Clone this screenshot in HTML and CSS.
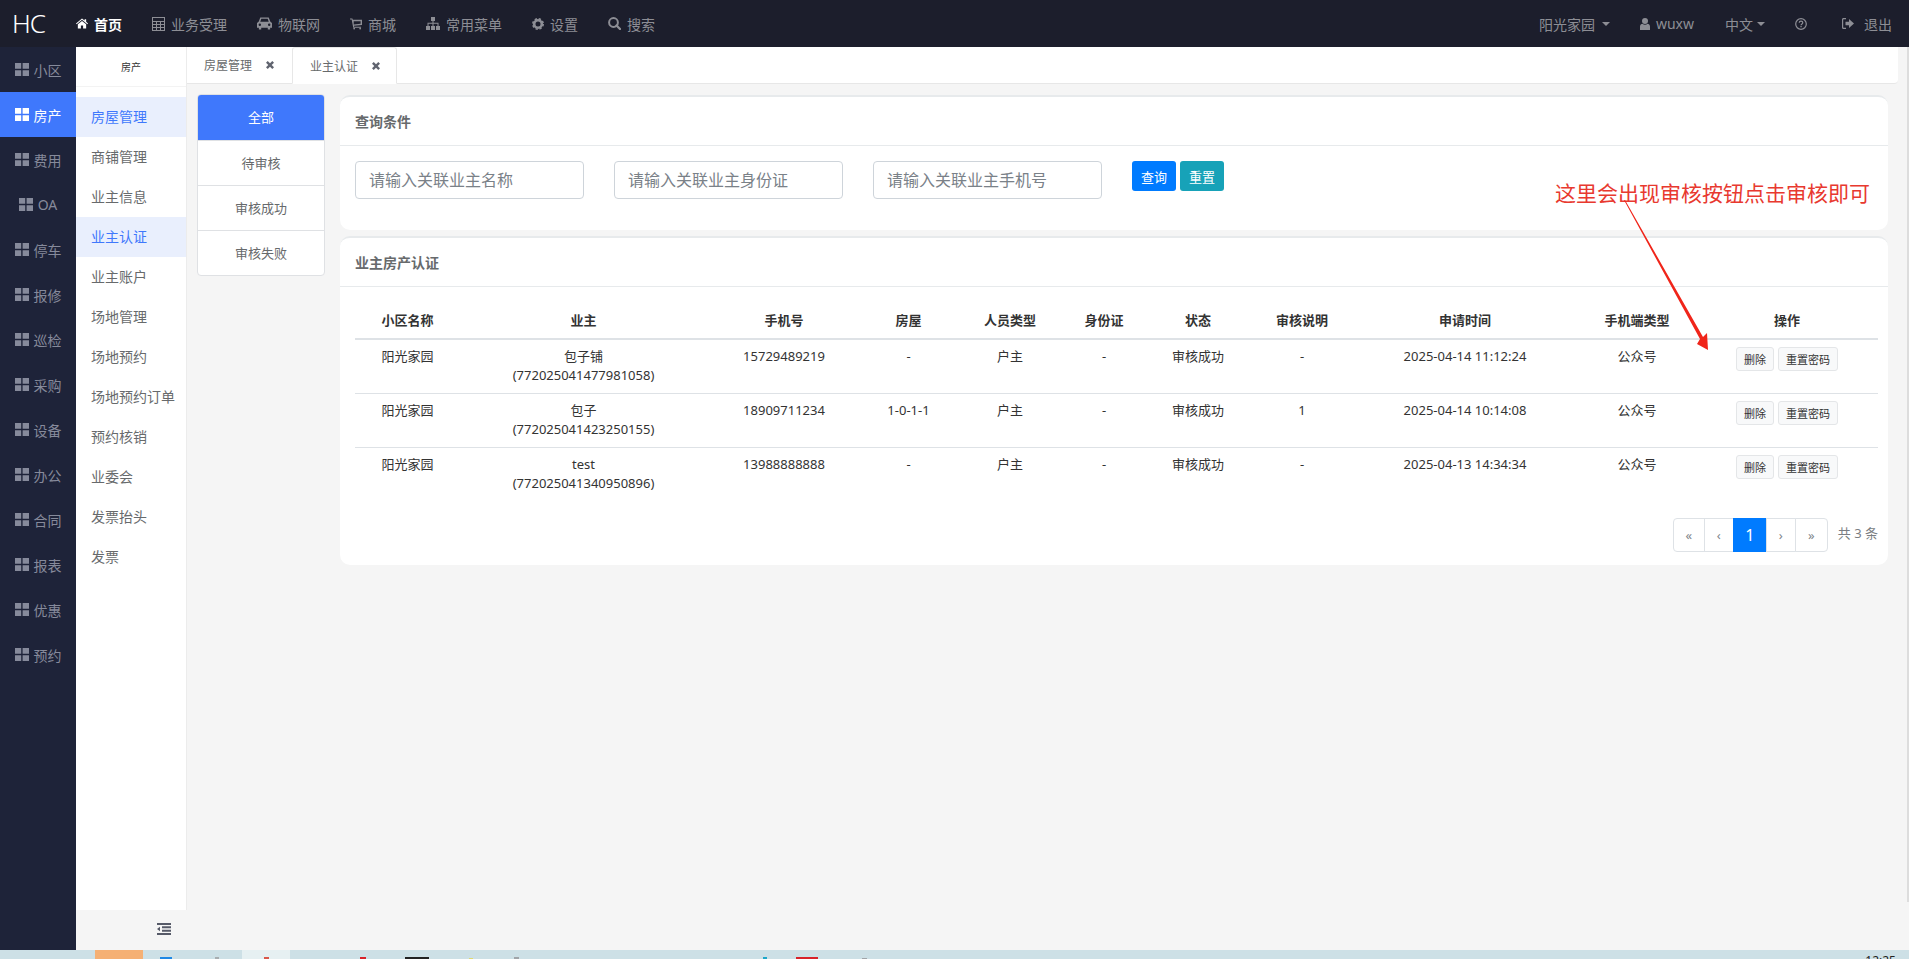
FILE: index.html
```html
<!DOCTYPE html>
<html lang="zh-CN">
<head>
  <meta charset="UTF-8" />
  <title>HC - 业主认证</title>
  <link rel="stylesheet" href="styles.css">
</head>
<body>

<svg class="sprite" xmlns="http://www.w3.org/2000/svg">
  <symbol id="i-grid" viewBox="0 0 14 13"><path d="M0 0h6.2v5.8H0zM7.6 0H14v5.8H7.6zM0 7.2h6.2V13H0zM7.6 7.2H14V13H7.6z"/></symbol>
  <symbol id="i-home" viewBox="0 0 13 11"><path d="M6.5 0 9.3 2.3V1H11v2.7L13 5.4l-.7.8L6.5 1.5.7 6.2 0 5.4zM2 6.3l4.500-3.600L11 6.300V11H7.700V7.800H5.300V11H2z"/></symbol>
  <symbol id="i-table" viewBox="0 0 13 14"><path fill-rule="evenodd" d="M0 0h13v14H0zM1 1v3h11V1zM1 5v2h3V5zM5 5v2h3V5zM9 5v2h3V5zM1 8v2h3V8zM5 8v2h3V8zM9 8v2h3V8zM1 11v2h3v-2zM5 11v2h3v-2zM9 11v2h3v-2z"/></symbol>
  <symbol id="i-car" viewBox="0 0 16 13"><path fill-rule="evenodd" d="M3.500 0h9l1.600 4.300L16 6v5h-2v2h-2.500v-2h-7v2H2v-2H0V6l1.900-1.700zM4.600 1.500 3.500 4.500h9l-1.100-3zM3 6.500a1.300 1.300 0 1 0 0 2.600 1.300 1.300 0 0 0 0-2.600zM13 6.500a1.300 1.300 0 1 0 0 2.600 1.300 1.300 0 0 0 0-2.600z"/></symbol>
  <symbol id="i-cart" viewBox="0 0 13 12"><path fill-rule="evenodd" d="M0 0h2.600l.4 1.500h10v5.500L4.300 8l.2 1H12v1H3.500L1.800 1H0zM4 3v3.600l7.500-.9V3z"/><circle cx="4.500" cy="11" r="1"/><circle cx="11" cy="11" r="1"/></symbol>
  <symbol id="i-sitemap" viewBox="0 0 14 13"><path d="M5 0h4v4H7.500v1.800H12.500V9H14v4h-4V9h1.500V6.800h-4V9H9v4H5V9h1.500V6.800h-4V9H4v4H0V9h1.500V5.800h5V4H5z"/></symbol>
  <symbol id="i-cog" viewBox="0 0 12 12"><circle cx="6" cy="6" r="3.800" fill="none" stroke="currentColor" stroke-width="2.600"/><circle cx="6" cy="6" r="5.200" fill="none" stroke="currentColor" stroke-width="1.600" stroke-dasharray="2.300 1.800"/></symbol>
  <symbol id="i-search" viewBox="0 0 13 13"><circle cx="5.500" cy="5.500" r="4.400" fill="none" stroke="currentColor" stroke-width="2"/><path d="M8.500 8.500 12 12" stroke="currentColor" stroke-width="2.400" stroke-linecap="round"/></symbol>
  <symbol id="i-user" viewBox="0 0 10 12"><circle cx="5" cy="3" r="3"/><path d="M0 12V8.500C0 7 1.200 5.800 2.500 5.800 3.200 6.400 4 6.700 5 6.700S6.800 6.400 7.500 5.800C8.800 5.800 10 7 10 8.500V12z"/></symbol>
  <symbol id="i-help" viewBox="0 0 12 12"><circle cx="6" cy="6" r="5.300" fill="none" stroke="currentColor" stroke-width="1.200"/><path d="M4.200 4.700C4.300 3.700 5 3.200 6 3.200 7.100 3.200 7.800 3.800 7.800 4.700 7.800 5.900 6.100 5.900 6.100 7.200" fill="none" stroke="currentColor" stroke-width="1.200"/><path d="M5.400 8h1.300v1.200H5.400z"/></symbol>
  <symbol id="i-exit" viewBox="0 0 12 11"><path d="M0 1.500C0 .6.600 0 1.500 0H4v1.200H1.700c-.3 0-.5.2-.5.500v7.600c0 .3.200.5.500.5H4V11H1.500C.6 11 0 10.400 0 9.500z"/><path d="M7 1 12 5.500 7 10V7.300H3.500V3.700H7z"/></symbol>
  <symbol id="i-close" viewBox="0 0 8 8"><path d="M1.700 0 4 2.300 6.300 0 8 1.700 5.700 4 8 6.300 6.300 8 4 5.700 1.700 8 0 6.300 2.300 4 0 1.700z"/></symbol>
  <symbol id="i-indent" viewBox="0 0 14 12"><path d="M0 0h14v2H0zM5 3.300h9v2H5zM5 6.700h9v2H5zM0 10h14v2H0zM3 3.800v4.400L0 6z"/></symbol>
</svg>

<div class="app">
  <header class="topbar">
    <div class="logo">HC</div>
    <nav class="top-nav">
      <a class="top-link is-current"><svg class="ico ico-home"><use href="#i-home"/></svg>首页</a>
      <a class="top-link"><svg class="ico ico-table"><use href="#i-table"/></svg>业务受理</a>
      <a class="top-link"><svg class="ico ico-car"><use href="#i-car"/></svg>物联网</a>
      <a class="top-link"><svg class="ico ico-cart"><use href="#i-cart"/></svg>商城</a>
      <a class="top-link"><svg class="ico ico-sitemap"><use href="#i-sitemap"/></svg>常用菜单</a>
      <a class="top-link"><svg class="ico ico-cog"><use href="#i-cog"/></svg>设置</a>
      <a class="top-link"><svg class="ico ico-search"><use href="#i-search"/></svg>搜索</a>
    </nav>
    <div class="top-right">
      <a class="top-link community">阳光家园<span class="caret"></span></a>
      <a class="top-link user"><svg class="ico ico-user"><use href="#i-user"/></svg>wuxw</a>
      <a class="top-link lang">中文<span class="caret"></span></a>
      <a class="top-link help"><svg class="ico ico-help"><use href="#i-help"/></svg></a>
      <a class="top-link logout"><svg class="ico ico-exit"><use href="#i-exit"/></svg>退出</a>
    </div>
  </header>

  <div class="shell">
    <aside class="side-main">
      <a class="side-link"><svg class="ico-grid"><use href="#i-grid"/></svg>小区</a>
      <a class="side-link is-active"><svg class="ico-grid"><use href="#i-grid"/></svg>房产</a>
      <a class="side-link"><svg class="ico-grid"><use href="#i-grid"/></svg>费用</a>
      <a class="side-link"><svg class="ico-grid"><use href="#i-grid"/></svg>OA</a>
      <a class="side-link"><svg class="ico-grid"><use href="#i-grid"/></svg>停车</a>
      <a class="side-link"><svg class="ico-grid"><use href="#i-grid"/></svg>报修</a>
      <a class="side-link"><svg class="ico-grid"><use href="#i-grid"/></svg>巡检</a>
      <a class="side-link"><svg class="ico-grid"><use href="#i-grid"/></svg>采购</a>
      <a class="side-link"><svg class="ico-grid"><use href="#i-grid"/></svg>设备</a>
      <a class="side-link"><svg class="ico-grid"><use href="#i-grid"/></svg>办公</a>
      <a class="side-link"><svg class="ico-grid"><use href="#i-grid"/></svg>合同</a>
      <a class="side-link"><svg class="ico-grid"><use href="#i-grid"/></svg>报表</a>
      <a class="side-link"><svg class="ico-grid"><use href="#i-grid"/></svg>优惠</a>
      <a class="side-link"><svg class="ico-grid"><use href="#i-grid"/></svg>预约</a>
    </aside>

    <aside class="side-sub">
      <div class="sub-panel">
        <div class="sub-title">房产</div>
        <ul class="sub-list">
          <li class="sub-item is-active">房屋管理</li>
          <li class="sub-item">商铺管理</li>
          <li class="sub-item">业主信息</li>
          <li class="sub-item is-active">业主认证</li>
          <li class="sub-item">业主账户</li>
          <li class="sub-item">场地管理</li>
          <li class="sub-item">场地预约</li>
          <li class="sub-item">场地预约订单</li>
          <li class="sub-item">预约核销</li>
          <li class="sub-item">业委会</li>
          <li class="sub-item">发票抬头</li>
          <li class="sub-item">发票</li>
        </ul>
      </div>
      <div class="sub-toggle"><svg class="ico-indent"><use href="#i-indent"/></svg></div>
    </aside>

    <main class="content">
      <div class="tabs">
        <div class="tab">房屋管理<svg class="ico-close"><use href="#i-close"/></svg></div>
        <div class="tab is-active">业主认证<svg class="ico-close"><use href="#i-close"/></svg></div>
      </div>

      <div class="page">
        <ul class="state-list">
          <li class="state-item is-active">全部</li>
          <li class="state-item">待审核</li>
          <li class="state-item">审核成功</li>
          <li class="state-item">审核失败</li>
        </ul>

        <div class="cards">
          <section class="card">
            <h5 class="card-head">查询条件</h5>
            <div class="query-row">
              <input class="query-input" type="text" placeholder="请输入关联业主名称" />
              <input class="query-input" type="text" placeholder="请输入关联业主身份证" />
              <input class="query-input" type="text" placeholder="请输入关联业主手机号" />
              <div class="query-btns">
                <button class="btn btn-blue">查询</button>
                <button class="btn btn-teal">重置</button>
              </div>
            </div>
          </section>

          <section class="card card-list">
            <h5 class="card-head">业主房产认证</h5>
            <div class="card-body">
              <table class="grid">
                <colgroup>
                  <col class="c1"><col class="c2"><col class="c3"><col class="c4"><col class="c5"><col class="c6">
                  <col class="c7"><col class="c8"><col class="c9"><col class="c10"><col class="c11">
                </colgroup>
                <thead>
                  <tr>
                    <th>小区名称</th><th>业主</th><th>手机号</th><th>房屋</th><th>人员类型</th><th>身份证</th>
                    <th>状态</th><th>审核说明</th><th>申请时间</th><th>手机端类型</th><th>操作</th>
                  </tr>
                </thead>
                <tbody>
                  <tr>
                    <td>阳光家园</td><td>包子铺<br>(772025041477981058)</td><td>15729489219</td><td>-</td><td>户主</td><td>-</td>
                    <td>审核成功</td><td>-</td><td>2025-04-14 11:12:24</td><td>公众号</td>
                    <td><button class="btn-mini">删除</button><button class="btn-mini">重置密码</button></td>
                  </tr>
                  <tr>
                    <td>阳光家园</td><td>包子<br>(772025041423250155)</td><td>18909711234</td><td>1-0-1-1</td><td>户主</td><td>-</td>
                    <td>审核成功</td><td>1</td><td>2025-04-14 10:14:08</td><td>公众号</td>
                    <td><button class="btn-mini">删除</button><button class="btn-mini">重置密码</button></td>
                  </tr>
                  <tr>
                    <td>阳光家园</td><td>test<br>(772025041340950896)</td><td>13988888888</td><td>-</td><td>户主</td><td>-</td>
                    <td>审核成功</td><td>-</td><td>2025-04-13 14:34:34</td><td>公众号</td>
                    <td><button class="btn-mini">删除</button><button class="btn-mini">重置密码</button></td>
                  </tr>
                </tbody>
              </table>
              <div class="pager-row">
                <ul class="pager">
                  <li class="pg pg-first">«</li>
                  <li class="pg">‹</li>
                  <li class="pg pg-on">1</li>
                  <li class="pg">›</li>
                  <li class="pg pg-last">»</li>
                </ul>
                <span class="pager-total">共 3 条</span>
              </div>
            </div>
          </section>
        </div>
      </div>
    </main>
    <div class="scroll-thumb"></div>
  </div>

  <footer class="taskbar">
    <span class="tb tb-orange"></span>
    <span class="tb tb-blue"></span>
    <span class="tb tb-gray1"></span>
    <span class="tb tb-pale"><i class="tb-dot"></i></span>
    <span class="tb tb-red1"></span>
    <span class="tb tb-black"></span>
    <span class="tb tb-yellow"></span>
    <span class="tb tb-gray2"></span>
    <span class="tb tb-cyan"></span>
    <span class="tb tb-red2"></span>
    <span class="tb tb-gray3"></span>
    <span class="tb-time">12:25</span>
  </footer>
</div>

<!-- annotation drawn on the screenshot -->
<div class="note-text">这里会出现审核按钮点击审核即可</div>
<svg class="note-arrow" viewBox="0 0 100 160" xmlns="http://www.w3.org/2000/svg">
  <polygon points="4,0 5,0 83,137 87,133 88,150 77,144 80,139" />
</svg>

</body>
</html>
```

FILE: styles.css
```css
* { box-sizing: border-box; }
html, body { margin: 0; height: 100%; overflow: hidden; }
body {
  font-family: "Noto Sans", "Noto Sans CJK SC", sans-serif;
  font-size: 13px;
  color: #676a6c;
  background: #f5f5f5;
  position: relative;
}
ul { list-style: none; margin: 0; padding: 0; }
.sprite { display: none; }
.app { height: 959px; display: flex; flex-direction: column; }

/* top bar */
.topbar {
  height: 47px;
  flex: none;
  display: flex;
  align-items: center;
  background: #1c1e2c;
  color: #8d8e95;
  font-size: 14px;
}
.logo {
  width: 76px;
  padding-left: 12px;
  color: #fff;
  font-size: 26px;
  font-weight: 300;
  line-height: 47px;
  letter-spacing: -1px;
}
.top-nav { display: flex; gap: 30px; }
.top-link { display: flex; align-items: center; white-space: nowrap; }
.top-link.is-current { color: #fff; font-weight: 700; }
.ico { fill: currentColor; color: inherit; margin-right: 6px; flex: none; }
.ico-home { width: 12px; height: 11px; }
.ico-table { width: 13px; height: 14px; }
.ico-car { width: 15px; height: 13px; }
.ico-cart { width: 12px; height: 12px; }
.ico-sitemap { width: 14px; height: 13px; }
.ico-cog { width: 12px; height: 12px; }
.ico-search { width: 13px; height: 13px; }
.ico-user { width: 10px; height: 12px; }
.ico-help { width: 12px; height: 12px; margin-right: 0; }
.ico-exit { width: 12px; height: 11px; margin-right: 10px; }
.top-right { margin-left: auto; display: flex; padding-right: 17px; }
.community { margin-right: 30px; }
.user { margin-right: 31px; }
.lang { margin-right: 30px; }
.help { margin-right: 35px; }
.caret {
  width: 0;
  height: 0;
  margin-left: 7px;
  border-style: solid;
  border-width: 4px 4px 0;
  border-color: currentColor transparent transparent;
}
.lang .caret { margin-left: 4px; }

.shell { flex: 1; min-height: 0; display: flex; }

/* first sidebar */
.side-main { width: 76px; flex: none; background: #1e2339; }
.side-link {
  height: 45px;
  display: flex;
  align-items: center;
  justify-content: center;
  gap: 5px;
  font-size: 14px;
  color: #868a9b;
}
.side-link.is-active { background: #3f78fc; color: #fff; }
.ico-grid { width: 14px; height: 13px; fill: currentColor; }

/* second sidebar */
.side-sub { width: 111px; flex: none; display: flex; flex-direction: column; }
.sub-panel { height: 863px; background: #fff; border-right: 1px solid #ececec; }
.sub-title {
  height: 40px;
  line-height: 40px;
  text-align: center;
  font-size: 10px;
  color: #333;
  border-bottom: 1px solid #f3f3f3;
}
.sub-list { padding-top: 10px; }
.sub-item {
  height: 40px;
  line-height: 40px;
  padding-left: 15px;
  font-size: 14px;
  color: #676a6c;
  white-space: nowrap;
}
.sub-item.is-active { background: #e9effd; color: #3f78fc; }
.sub-toggle { flex: 1; display: flex; align-items: flex-start; justify-content: flex-end; padding: 13px 16px 0 0; }
.ico-indent { width: 14px; height: 12px; fill: #565a68; }

/* tabs */
.content { flex: 1; min-width: 0; display: flex; flex-direction: column; }
.tabs {
  height: 37px;
  flex: none;
  display: flex;
  margin-right: 9px;
  background: #fff;
  border-bottom: 1px solid #e7e7e7;
  border-radius: 0 0 4px 0;
}
.tab {
  width: 105px;
  display: flex;
  align-items: center;
  padding-left: 17px;
  font-size: 12px;
  color: #676a6c;
}
.tab.is-active { border: 1px solid #e7e7e7; border-bottom: 1px solid #fff; border-radius: 3px 3px 0 0; height: 37px; }
.ico-close { width: 8px; height: 8px; margin-left: 14px; fill: #60646f; }

.page { flex: 1; min-height: 0; display: flex; gap: 15px; padding: 10px 19px 0 10px; }

/* state list */
.state-list {
  width: 128px;
  flex: none;
  align-self: flex-start;
  background: #fff;
  border: 1px solid #dfe1e4;
  border-radius: 4px;
  overflow: hidden;
}
.state-item {
  height: 45px;
  line-height: 44px;
  text-align: center;
  font-size: 13px;
  border-top: 1px solid #dfe1e4;
}
.state-item:first-child { border-top: 0; }
.state-item.is-active { background: #3f78fc; color: #fff; }

/* cards */
.cards { flex: 1; min-width: 0; display: flex; flex-direction: column; gap: 6px; padding-top: 1px; }
.card { background: #fff; border-top: 2px solid #e7eaec; border-radius: 10px; height: 135px; }
.card-list { height: 329px; }
.card-head {
  margin: 0;
  height: 49px;
  line-height: 49px;
  padding-left: 15px;
  font-size: 14px;
  font-weight: 700;
  color: #676a6c;
  border-bottom: 1px solid #e7eaec;
}

.query-row { display: flex; padding: 15px 15px 0; gap: 30px; }
.query-input {
  width: 229px;
  height: 38px;
  padding: 0 13px;
  border: 1px solid #ced4da;
  border-radius: 4px;
  font: 16px "Noto Sans", "Noto Sans CJK SC", sans-serif;
  color: #495057;
  outline: none;
}
.query-input::placeholder { color: #7a8188; }
.query-btns { display: flex; gap: 4px; height: 30px; }
.btn {
  width: 44px;
  height: 30px;
  padding: 0;
  border: 0;
  border-radius: 3px;
  color: #fff;
  font: 13px "Noto Sans", "Noto Sans CJK SC", sans-serif;
}
.btn-blue { background: #007bff; }
.btn-teal { background: #17a2b8; }

/* table */
.card-body { padding: 14px 10px 0 15px; }
.grid { width: 1523px; table-layout: fixed; border-collapse: collapse; color: #333; }
.c1 { width: 105px; } .c2 { width: 247px; } .c3 { width: 154px; } .c4 { width: 95px; }
.c5 { width: 108px; } .c6 { width: 80px; } .c7 { width: 108px; } .c8 { width: 100px; }
.c9 { width: 226px; } .c10 { width: 118px; } .c11 { width: 182px; }
.grid th {
  height: 38px;
  padding: 0;
  text-align: center;
  font-size: 13px;
  font-weight: 700;
  border-bottom: 2px solid #dee2e6;
}
.grid td {
  height: 54px;
  padding: 7px 0 8px;
  line-height: 19px;
  text-align: center;
  vertical-align: top;
  border-bottom: 1px solid #dee2e6;
}
.grid tbody tr:last-child td { border-bottom: 0; }
.btn-mini {
  height: 24px;
  padding: 0 7px;
  margin: 0 2px;
  background: #f8f9fa;
  border: 1px solid #e4e6e8;
  border-radius: 3px;
  color: #333;
  font: 11px "Noto Sans", "Noto Sans CJK SC", sans-serif;
  vertical-align: top;
}

/* pager */
.pager-row { display: flex; justify-content: flex-end; gap: 10px; margin-top: 16px; }
.pager { display: flex; height: 34px; }
.pg {
  width: 30px;
  line-height: 32px;
  text-align: center;
  color: #80858a;
  font-size: 13px;
  background: #fff;
  border: 1px solid #dee2e6;
  margin-left: -1px;
}
.pg-first { width: 32px; border-radius: 4px 0 0 4px; }
.pg-last { width: 33px; border-radius: 0 4px 4px 0; }
.pg-on { width: 34px; background: #007bff; border-color: #007bff; color: #fff; font-size: 16px; }
.pager-total { line-height: 30px; font-size: 13px; color: #7a7e82; }

.scroll-thumb { width: 2px; flex: none; height: 855px; background: #ddd; }

/* bottom sliver of the desktop taskbar */
.taskbar { height: 9px; flex: none; display: flex; align-items: flex-start; background: #cde0e6; overflow: hidden; }
.tb { display: block; height: 9px; flex: none; }
.tb::before { content: ""; }
.tb-orange { margin-left: 95px; width: 48px; background: #f5b074; }
.tb-blue { margin-left: 17px; width: 12px; height: 2px; margin-top: 7px; background: #1e88e5; }
.tb-gray1 { margin-left: 43px; width: 4px; height: 2px; margin-top: 7px; background: #a8adb0; }
.tb-pale { margin-left: 23px; width: 48px; background: #e6f0f2; display: flex; justify-content: center; }
.tb-dot { width: 5px; height: 2px; margin-top: 7px; background: #d9584a; }
.tb-red1 { margin-left: 70px; width: 6px; height: 2px; margin-top: 7px; background: #d8232a; }
.tb-black { margin-left: 39px; width: 24px; height: 2px; margin-top: 7px; background: #222; }
.tb-yellow { margin-left: 40px; width: 4px; height: 1px; margin-top: 8px; background: #e0d870; }
.tb-gray2 { margin-left: 41px; width: 5px; height: 2px; margin-top: 7px; background: #a0a4a8; }
.tb-cyan { margin-left: 244px; width: 4px; height: 2px; margin-top: 7px; background: #1ea7c9; }
.tb-red2 { margin-left: 29px; width: 22px; height: 2px; margin-top: 7px; background: #d8232a; }
.tb-gray3 { margin-left: 44px; width: 5px; height: 1px; margin-top: 8px; background: #a0a4a8; }
.tb-time { margin-left: auto; margin-right: 13px; margin-top: 4px; font-size: 12px; line-height: 14px; color: #222; }

/* annotation over the page */
.note-text {
  position: absolute;
  left: 1555px;
  top: 177px;
  font-size: 21px;
  line-height: 32px;
  color: #e8392f;
  white-space: nowrap;
}
.note-arrow {
  position: absolute;
  left: 1620px;
  top: 200px;
  width: 100px;
  height: 160px;
  fill: #f0251a;
}
```
